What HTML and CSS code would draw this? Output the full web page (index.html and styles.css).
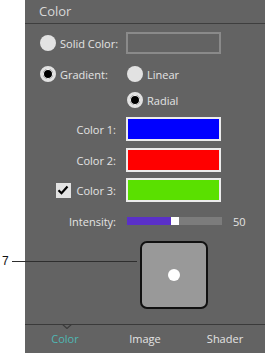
FILE: index.html
```html
<!DOCTYPE html>
<html lang="en">
<head>
<meta charset="UTF-8">
<meta name="viewport" content="width=device-width, initial-scale=1.0">
<title>Color</title>
<link rel="stylesheet" href="styles.css">
</head>
<body>
<div class="page">
    <div class="gutter"></div>
    <div class="panel">
        <div class="panel-head">Color</div>

        <div class="row row-solid">
            <span class="radio"></span>
            <span class="opt-text">Solid Color:</span>
            <span class="swatch swatch-empty"></span>
        </div>

        <div class="row row-gradient">
            <span class="radio checked"></span>
            <span class="opt-text">Gradient:</span>
            <span class="sub-opt">
                <span class="radio"></span>
                <span class="opt-text">Linear</span>
            </span>
        </div>

        <div class="row row-radial">
            <span class="sub-opt">
                <span class="radio checked"></span>
                <span class="opt-text">Radial</span>
            </span>
        </div>

        <div class="row field row-c1">
            <span class="label">Color 1:</span>
            <span class="swatch blue"></span>
        </div>
        <div class="row field row-c2">
            <span class="label">Color 2:</span>
            <span class="swatch red"></span>
        </div>
        <div class="row field row-c3">
            <span class="label">
                <span class="check">
                    <svg width="12" height="10" viewBox="0 0 12 10"><path d="M1.5 5.2 L4.5 8.2 L10.5 1.5" fill="none" stroke="#000" stroke-width="2.2"/></svg>
                </span>
                Color 3:
            </span>
            <span class="swatch green"></span>
        </div>

        <div class="row field row-intensity">
            <span class="label">Intensity:</span>
            <span class="slider">
                <span class="slider-fill"></span>
                <span class="slider-thumb"></span>
            </span>
            <span class="slider-value">50</span>
        </div>

        <div class="preview-wrap">
            <div class="preview"><span class="dot"></span></div>
        </div>

        <div class="tabs">
            <svg class="notch" width="10" height="5" viewBox="0 0 10 5"><path d="M0 0 L5 4.5 L10 0" fill="none" stroke="#3a3a3a" stroke-width="1.2"/></svg>
            <span class="tab active">Color</span>
            <span class="tab">Image</span>
            <span class="tab">Shader</span>
        </div>
    </div>

    <div class="callout">
        <span class="callout-num">7</span>
        <span class="callout-line"></span>
    </div>
</div>
</body>
</html>
```

FILE: styles.css
```css
body {
    margin: 0;
    padding: 0;
    background-color: #fff;
    font-family: "Open Sans", "Noto Sans", sans-serif;
}

.page {
    position: relative;
    display: flex;
    width: 265px;
    height: 353px;
}

.gutter {
    width: 25px;
    flex-shrink: 0;
}

.panel {
    width: 240px;
    height: 353px;
    background-color: #636363;
    color: #e4e4e4;
    font-size: 11px;
    display: flex;
    flex-direction: column;
}

.panel-head {
    height: 23px;
    border-bottom: 1px solid #3e3e3e;
    padding-left: 14px;
    font-size: 13px;
    line-height: 22px;
    color: #d8d8d8;
}

.row {
    display: flex;
    align-items: center;
}

.row-solid {
    height: 22px;
    margin-top: 8px;
    padding-left: 15px;
}

.row-gradient {
    height: 20px;
    margin-top: 10px;
    padding-left: 15px;
}

.row-radial {
    height: 20px;
    margin-top: 6px;
}

.radio {
    width: 16px;
    height: 16px;
    border-radius: 50%;
    background-color: #e2e2e2;
    box-sizing: border-box;
    flex-shrink: 0;
}

.radio.checked {
    background-color: #000;
    border: 3px solid #e2e2e2;
    box-shadow: inset 0 0 0 1px #fff;
}

.opt-text {
    margin-left: 4px;
}

.row-solid .opt-text,
.row-gradient > .opt-text {
    width: 62px;
}

.sub-opt {
    display: flex;
    align-items: center;
}

.row-gradient .sub-opt {
    margin-left: 5px;
}

.row-radial .sub-opt {
    margin-left: 102px;
}

.swatch {
    display: block;
    width: 95px;
    height: 24px;
    box-sizing: border-box;
    border: 2px solid #ececec;
}

.swatch-empty {
    height: 22px;
    border-color: #8a8a8a;
    margin-left: 4px;
}

.blue { background-color: #0000ff; }
.red { background-color: #ff0000; }
.green { background-color: #5ae000; }

.field {
    height: 24px;
}

.row-c1 { margin-top: 7px; }
.row-c2 { margin-top: 7px; }
.row-c3 { margin-top: 6px; }

.field .label {
    width: 91px;
    text-align: right;
    margin-right: 10px;
    display: flex;
    justify-content: flex-end;
    align-items: center;
}

.check {
    width: 15px;
    height: 15px;
    background-color: #e2e2e2;
    display: flex;
    align-items: center;
    justify-content: center;
    margin-right: 6px;
}

.row-intensity {
    height: 18px;
    margin-top: 10px;
}

.slider {
    position: relative;
    width: 95px;
    height: 8px;
    background-color: #7c7c7c;
    margin-left: 1px;
}

.slider-fill {
    display: block;
    width: 44px;
    height: 8px;
    background-color: #5a30c8;
}

.slider-thumb {
    position: absolute;
    left: 44px;
    top: 0;
    width: 8px;
    height: 8px;
    background-color: #fff;
}

.slider-value {
    margin-left: 11px;
}

.preview-wrap {
    display: flex;
    justify-content: center;
    margin-top: 11px;
    padding-left: 58px;
}

.preview {
    width: 68px;
    height: 68px;
    box-sizing: border-box;
    border: 2px solid #111;
    border-radius: 7px;
    background-color: #999;
    display: flex;
    align-items: center;
    justify-content: center;
}

.dot {
    width: 12px;
    height: 12px;
    border-radius: 50%;
    background-color: #fff;
}

.tabs {
    position: relative;
    margin-top: auto;
    height: 28px;
    border-top: 1px solid #3a3a3a;
    display: grid;
    grid-template-columns: 80px 80px 80px;
    align-items: center;
    font-size: 11px;
}

.notch {
    position: absolute;
    left: 37px;
    top: -1px;
}

.tab {
    text-align: center;
    color: #e4e4e4;
    padding-bottom: 1px;
}

.tab.active {
    color: #4fb8b4;
}

.callout {
    position: absolute;
    left: 2px;
    top: 254px;
    display: flex;
    align-items: center;
}

.callout-num {
    font-family: "Liberation Sans", sans-serif;
    font-size: 12px;
    color: #111;
    width: 10px;
}

.callout-line {
    width: 125px;
    height: 1px;
    background-color: #2e2e2e;
}
```
